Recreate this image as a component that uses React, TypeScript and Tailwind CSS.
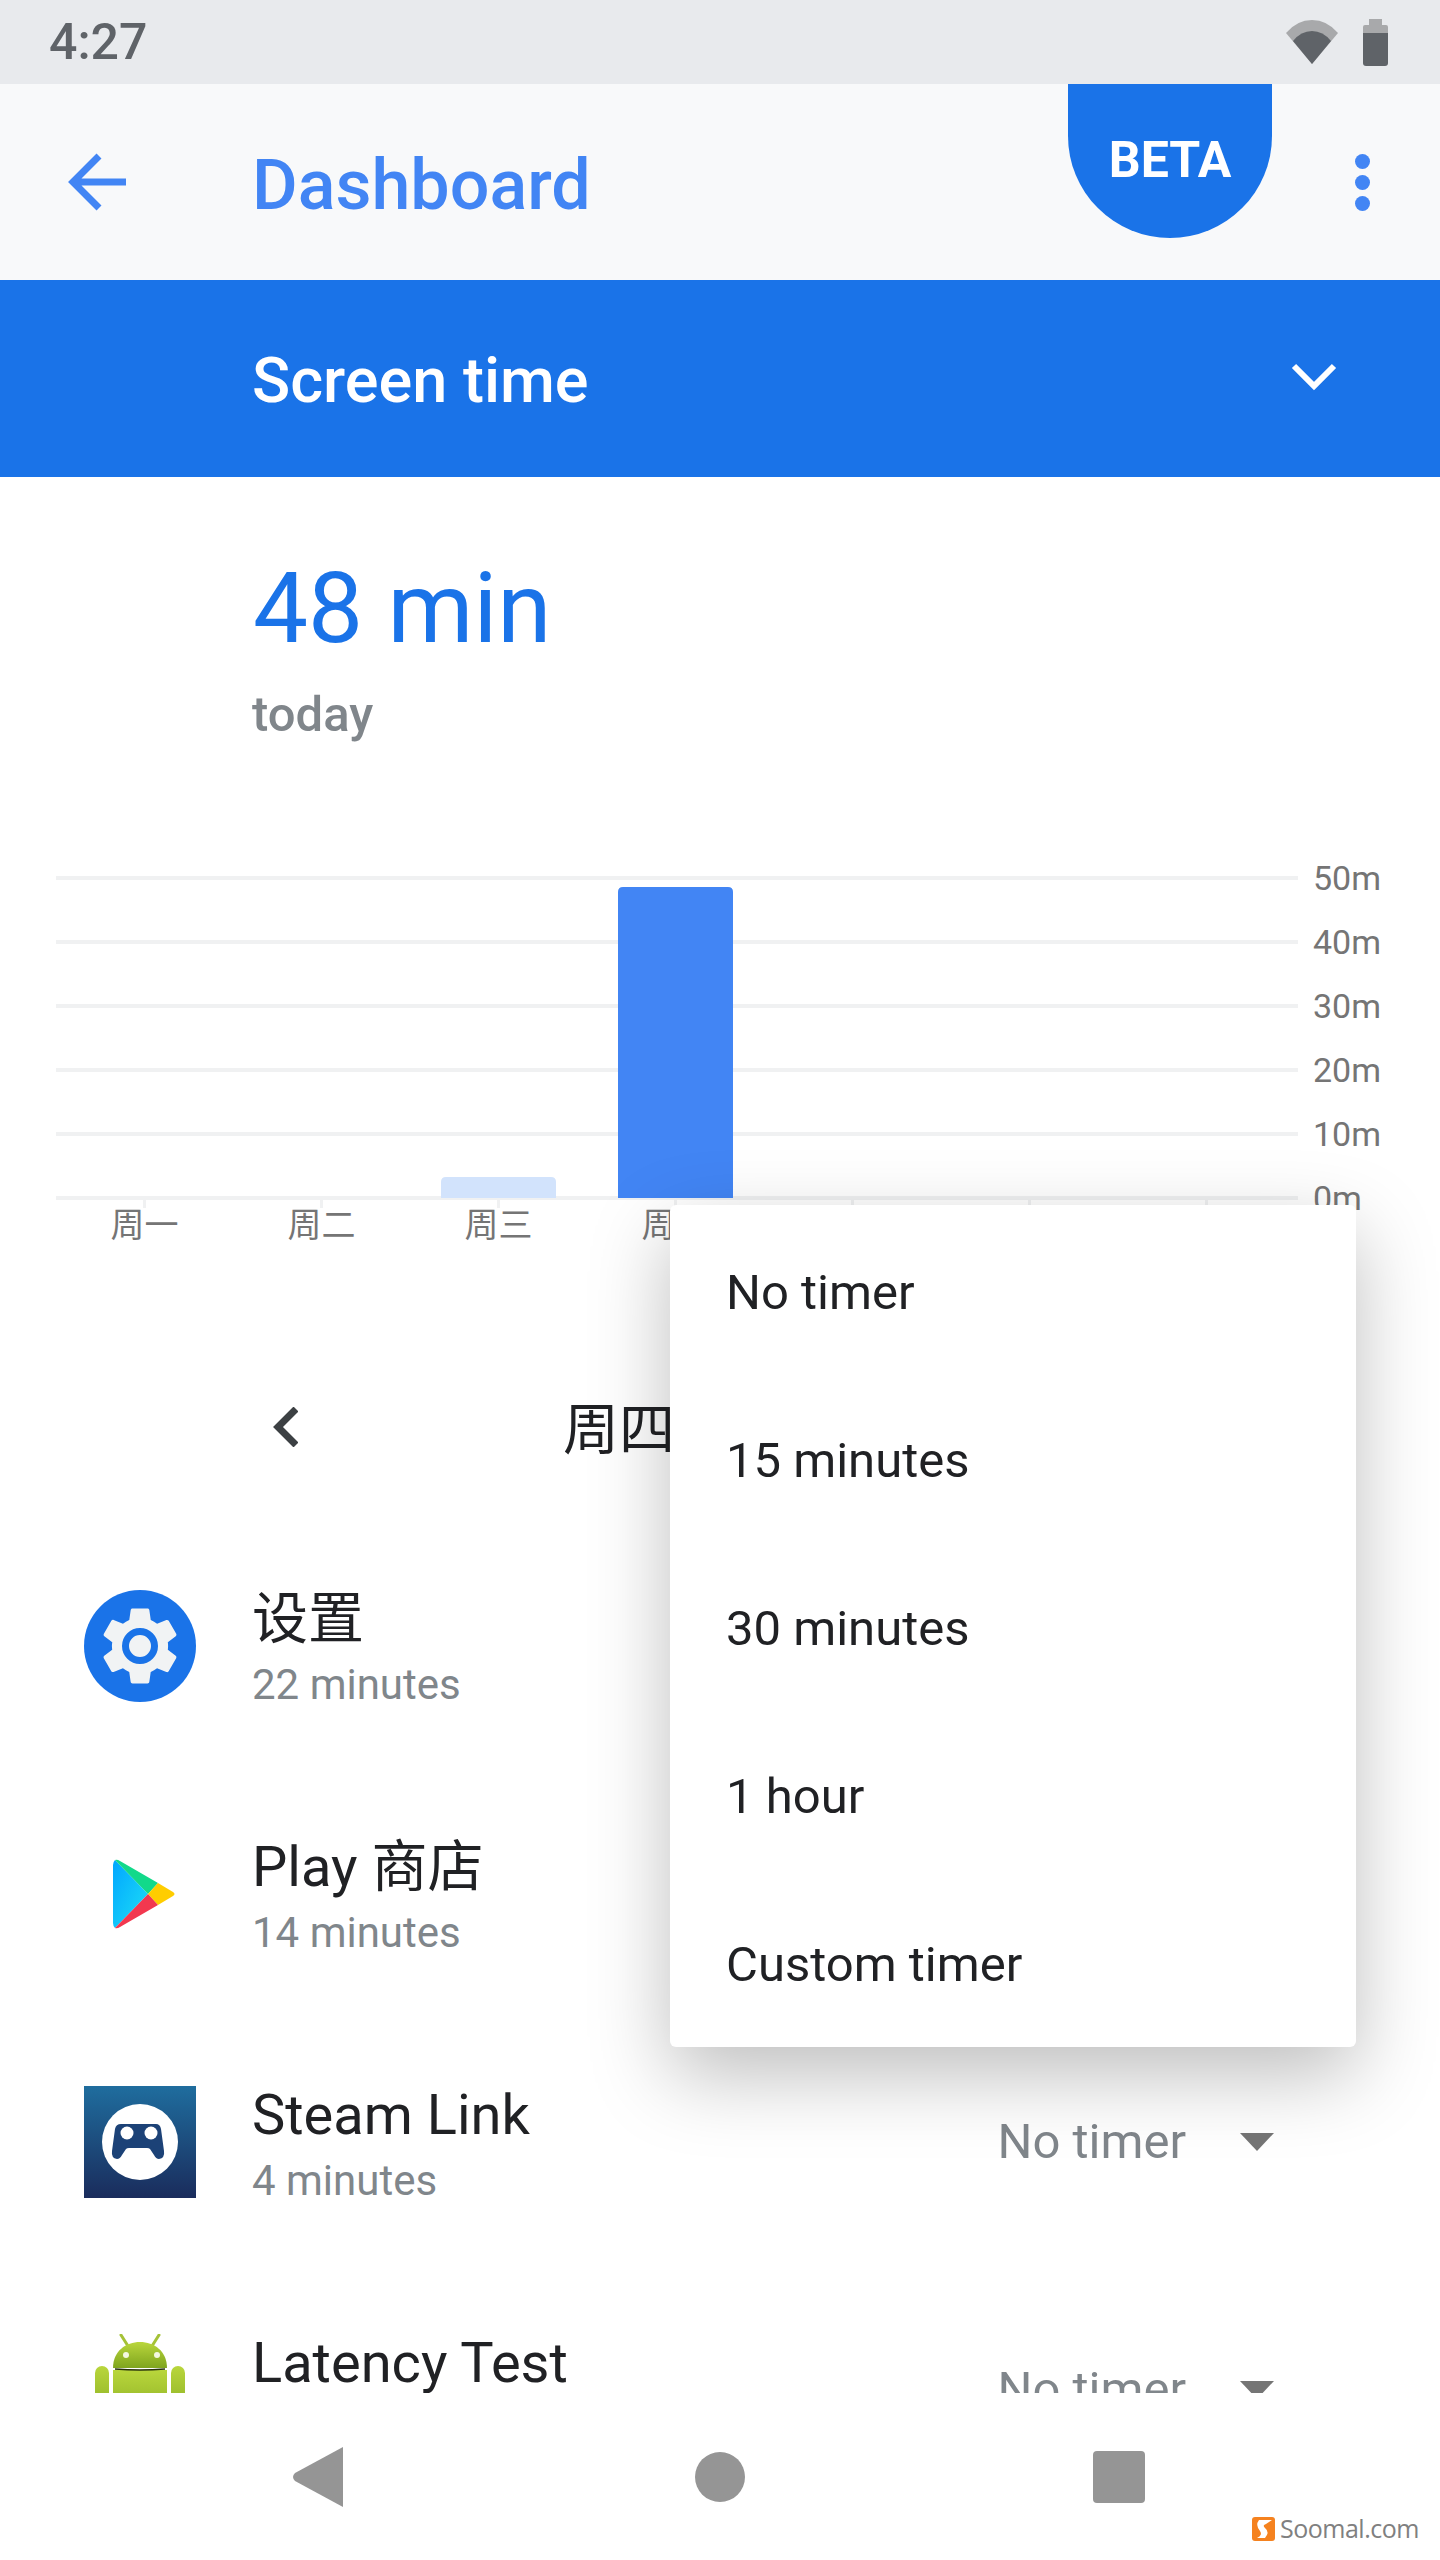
const days = ["周一", "周二", "周三", "周四", "周五", "周六", "周日"];
const gridLines = [
  { y: 18, label: "50m" },
  { y: 82, label: "40m" },
  { y: 146, label: "30m" },
  { y: 210, label: "20m" },
  { y: 274, label: "10m" },
  { y: 338, label: "0m" },
];
const timerOptions = ["No timer", "15 minutes", "30 minutes", "1 hour", "Custom timer"];

function SettingsIcon() {
  return (
    <svg viewBox="0 0 112 112" className="h-full w-full">
      <circle cx="56" cy="56" r="56" fill="#1a73e8" />
      <g transform="translate(56 56) scale(3.9) translate(-12 -12)">
        <path
          fill="#f1f3f4"
          d="M19.14 12.94c.04-.3.06-.61.06-.94 0-.32-.02-.64-.07-.94l2.03-1.58c.18-.14.23-.41.12-.61l-1.92-3.32c-.12-.22-.37-.29-.59-.22l-2.39.96c-.5-.38-1.03-.7-1.62-.94l-.36-2.54c-.04-.24-.24-.41-.48-.41h-3.84c-.24 0-.43.17-.47.41l-.36 2.54c-.59.24-1.13.57-1.62.94l-2.39-.96c-.22-.08-.47 0-.59.22L2.74 8.87c-.12.21-.08.47.12.61l2.03 1.58c-.05.3-.09.63-.09.94s.02.64.07.94l-2.03 1.58c-.18.14-.23.41-.12.61l1.92 3.32c.12.22.37.29.59.22l2.39-.96c.5.38 1.03.7 1.62.94l.36 2.54c.05.24.24.41.48.41h3.84c.24 0 .44-.17.47-.41l.36-2.54c.59-.24 1.13-.56 1.62-.94l2.39.96c.22.08.47 0 .59-.22l1.92-3.32c.12-.22.07-.47-.12-.61l-2.01-1.58z"
        />
      </g>
      <circle cx="56" cy="56" r="14.5" fill="#f1f3f4" stroke="#1a73e8" strokeWidth="7" />
    </svg>
  );
}

function PlayIcon() {
  return (
    <svg viewBox="0 0 112 112" className="h-full w-full">
      <defs>
        <linearGradient id="playBlue" x1="0" y1="0" x2="1" y2="1">
          <stop offset="0" stopColor="#00a6ff" />
          <stop offset="1" stopColor="#1fe0f5" />
        </linearGradient>
      </defs>
      <path d="M31 22 L64 56 L31 90 Q29 88 29 85 V27 Q29 24 31 22 Z" fill="url(#playBlue)" />
      <path d="M31 22 Q33 21 36 23 L74 45 L64 56 Z" fill="#12d98a" />
      <path d="M74 45 L89 54 Q92 56 89 58 L74 67 L64 56 Z" fill="#ffcd00" />
      <path d="M31 90 L64 56 L74 67 L36 89 Q33 91 31 90 Z" fill="#f2384f" />
    </svg>
  );
}

function SteamLinkIcon() {
  return (
    <svg viewBox="0 0 112 112" className="h-full w-full">
      <defs>
        <linearGradient id="steamBg" x1="0" y1="0" x2="0" y2="1">
          <stop offset="0" stopColor="#1f6d9e" />
          <stop offset="1" stopColor="#1a2c5c" />
        </linearGradient>
      </defs>
      <rect width="112" height="112" fill="url(#steamBg)" />
      <circle cx="56" cy="56" r="38" fill="#ffffff" />
      <path
        d="M37 38 H72 Q76 38 77 43 L80 65 Q81 72 75 73 Q72 73 70 69 L66 63 Q65 62 63 62 H45 Q43 62 42 63 L38 69 Q36 73 33 73 Q27 72 28 65 L31 43 Q32 38 37 38 Z"
        fill="#1c4277"
      />
      <circle cx="43" cy="47" r="6.5" fill="#ffffff" />
      <circle cx="67" cy="47" r="6.5" fill="#ffffff" />
    </svg>
  );
}

function AndroidIcon() {
  return (
    <svg viewBox="0 0 112 112" className="h-full w-full">
      <defs>
        <linearGradient id="droid" x1="0" y1="0" x2="0" y2="1">
          <stop offset="0" stopColor="#b9d63c" />
          <stop offset="1" stopColor="#7fa51e" />
        </linearGradient>
      </defs>
      <path d="M37 1 L44 12 M75 1 L68 12" stroke="#a5c237" strokeWidth="3" strokeLinecap="round" />
      <path d="M29 34 C29 17 42 8 56 8 C70 8 83 17 83 34 Z" fill="url(#droid)" />
      <rect x="29" y="36" width="54" height="60" fill="url(#droid)" />
      <rect x="11" y="32" width="14" height="60" rx="7" fill="url(#droid)" />
      <rect x="87" y="32" width="14" height="60" rx="7" fill="url(#droid)" />
      <path d="M31 35 Q56 37 81 35" stroke="#26300a" strokeWidth="1.5" fill="none" />
      <circle cx="42" cy="21" r="3" fill="#f4f8e0" />
      <circle cx="73" cy="21" r="3" fill="#f4f8e0" />
    </svg>
  );
}

const apps = [
  { name: "设置", usage: "22 minutes", icon: <SettingsIcon /> },
  { name: "Play 商店", usage: "14 minutes", icon: <PlayIcon /> },
  { name: "Steam Link", usage: "4 minutes", icon: <SteamLinkIcon /> },
  { name: "Latency Test", usage: "", icon: <AndroidIcon /> },
];

function UsageChart() {
  return (
    <svg viewBox="0 -10 1440 400" className="block h-[400px] w-[1440px]">
      {gridLines.map((line) => (
        <g key={line.label}>
          <rect x="56" y={line.y - 2} width="1242" height="4" fill="#f0f1f2" />
          <text x="1313" y={line.y + 12} fontSize="34" fill="#757575">
            {line.label}
          </text>
        </g>
      ))}
      <path d="M441 338 V322 Q441 317 446 317 H551 Q556 317 556 322 V338 Z" fill="#d2e3fc" />
      <path d="M618 338 V32 Q618 27 623 27 H728 Q733 27 733 32 V338 Z" fill="#4285f4" />
      {days.map((day, i) => (
        <g key={day}>
          <rect x={143 + i * 177} y="338" width="3" height="10" fill="#f0f1f2" />
          <text x={144.5 + i * 177} y="377" fontSize="34" fill="#757575" textAnchor="middle">
            {day}
          </text>
        </g>
      ))}
    </svg>
  );
}

export default function App() {
  return (
    <div className="relative h-[2560px] w-[1440px] overflow-hidden bg-white font-[Roboto,'Noto_Sans_CJK_SC',sans-serif]">
      {/* Status bar */}
      <div className="flex h-[84px] items-center justify-between bg-[#e8eaed] pl-[49px] pr-[52px]">
        <span className="text-[50px] leading-none font-medium text-[#5f6368]">4:27</span>
        <div className="flex items-center gap-[24px]">
          <svg width="54" height="44" viewBox="0 0 54 44">
            <path d="M27 44 L1 13 Q12 0 27 0 Q42 0 53 13 Z" fill="#a8a9ab" />
            <path d="M27 44 L8 21 Q16 11 27 11 Q38 11 46 21 Z" fill="#5f6368" />
          </svg>
          <svg width="25" height="47" viewBox="0 0 25 47">
            <rect x="6" y="0" width="13" height="8" fill="#a8a9ab" />
            <rect x="0" y="6" width="25" height="10" rx="2" fill="#a8a9ab" />
            <path d="M0 14 H25 V44 Q25 47 22 47 H3 Q0 47 0 44 Z" fill="#5f6368" />
          </svg>
        </div>
      </div>

      {/* App bar */}
      <div className="relative flex h-[196px] items-center bg-[#f8f9fa]">
        <svg width="64" height="64" viewBox="0 0 64 64" className="ml-[66px]" fill="none" stroke="#4285f4" strokeWidth="7">
          <path d="M60 32 H9 M33 6 L7 32 L33 58" />
        </svg>
        <span className="mt-[6px] ml-[122px] text-[70px] font-medium text-[#4285f4]">Dashboard</span>
        <div className="absolute top-0 left-[1068px] flex h-[154px] w-[204px] justify-center rounded-b-full bg-[#1a73e8] pt-[50px]">
          <span className="text-[50px] leading-[52px] font-bold text-white">BETA</span>
        </div>
        <div className="absolute top-[70px] left-[1355px] flex flex-col gap-[6px]">
          <span className="h-[15px] w-[15px] rounded-full bg-[#4285f4]" />
          <span className="h-[15px] w-[15px] rounded-full bg-[#4285f4]" />
          <span className="h-[15px] w-[15px] rounded-full bg-[#4285f4]" />
        </div>
      </div>

      {/* Section band */}
      <div className="flex h-[197px] items-center justify-between bg-[#1a73e8] pl-[252px] pr-[103px]">
        <span className="mt-[6px] text-[63px] font-medium text-white">Screen time</span>
        <svg width="46" height="30" viewBox="0 0 46 30" fill="none" stroke="#ffffff" strokeWidth="6" className="-mt-[3px]">
          <path d="M3 4 L23 24 L43 4" />
        </svg>
      </div>

      {/* Scrolling content */}
      <div className="h-[1916px] overflow-hidden">
        <div className="h-[373px] pl-[253px] pt-[84px]">
          <div className="text-[98px] leading-[96px] text-[#1a73e8]">48 min</div>
          <div className="mt-[28px] -ml-[1px] text-[49px] leading-[60px] font-medium text-[#80868b]">today</div>
        </div>

        <UsageChart />

        <div className="flex h-[272px] items-center pl-[273px] pt-[88px]">
          <svg width="25" height="40" viewBox="0 0 25 40" fill="none" stroke="#3c4043" strokeWidth="7" className="-mt-[6px]">
            <path d="M23 2 L5 20 L23 38" />
          </svg>
          <span className="ml-[265px] text-[56px] text-[#202124]">周四</span>
        </div>

        {apps.map((app) => (
          <div key={app.name} className="flex h-[248px] items-center pl-[84px]">
            <div className="h-[112px] w-[112px] shrink-0">{app.icon}</div>
            <div className="ml-[56px] h-[132px] pt-[6px]">
              <div className="text-[56px] leading-[66px] text-[#202124]">{app.name}</div>
              {app.usage && <div className="text-[42px] leading-[66px] text-[#80868b]">{app.usage}</div>}
            </div>
            <div className="ml-auto flex items-center gap-[54px] pr-[166px]">
              <span className="text-[49px] text-[#80868b]">No timer</span>
              <svg width="34" height="18" viewBox="0 0 34 18">
                <path d="M0 0 H34 L17 18 Z" fill="#757575" />
              </svg>
            </div>
          </div>
        ))}
      </div>

      {/* Navigation bar */}
      <div className="flex h-[167px] items-center justify-center gap-[350px] bg-white">
        <svg width="50" height="60" viewBox="0 0 50 60" className="-ml-[3px]">
          <path d="M50 0 V60 L2 34 Q-2 30 2 26 Z" fill="#959595" />
        </svg>
        <span className="ml-[2px] h-[50px] w-[50px] rounded-full bg-[#959595]" />
        <span className="-ml-[2px] h-[52px] w-[52px] rounded-[4px] bg-[#959595]" />
      </div>

      {/* Timer menu */}
      <div className="absolute top-[1205px] left-[670px] w-[686px] rounded-[6px] bg-white py-[1px] shadow-[0_28px_80px_rgba(0,0,0,0.26)]">
        {timerOptions.map((option) => (
          <div key={option} className="flex h-[168px] items-center pl-[56px] pt-[6px] text-[49px] text-[#202124]">
            {option}
          </div>
        ))}
      </div>

      {/* Watermark */}
      <div className="absolute top-[2516px] left-[1252px] flex items-center gap-[5px]">
        <svg width="23" height="24" viewBox="0 0 23 24">
          <rect width="23" height="24" rx="3" fill="#f5821f" />
          <path d="M7 3 H20 L14 7 Q10 8 13 11 Q18 15 13 21 H5 Q11 18 8 14 Q3 8 7 3 Z" fill="#ffffff" />
        </svg>
        <span className="font-['Open_Sans',sans-serif] text-[25px] leading-none tracking-[-0.5px] text-[#808080]">Soomal.com</span>
      </div>
    </div>
  );
}
